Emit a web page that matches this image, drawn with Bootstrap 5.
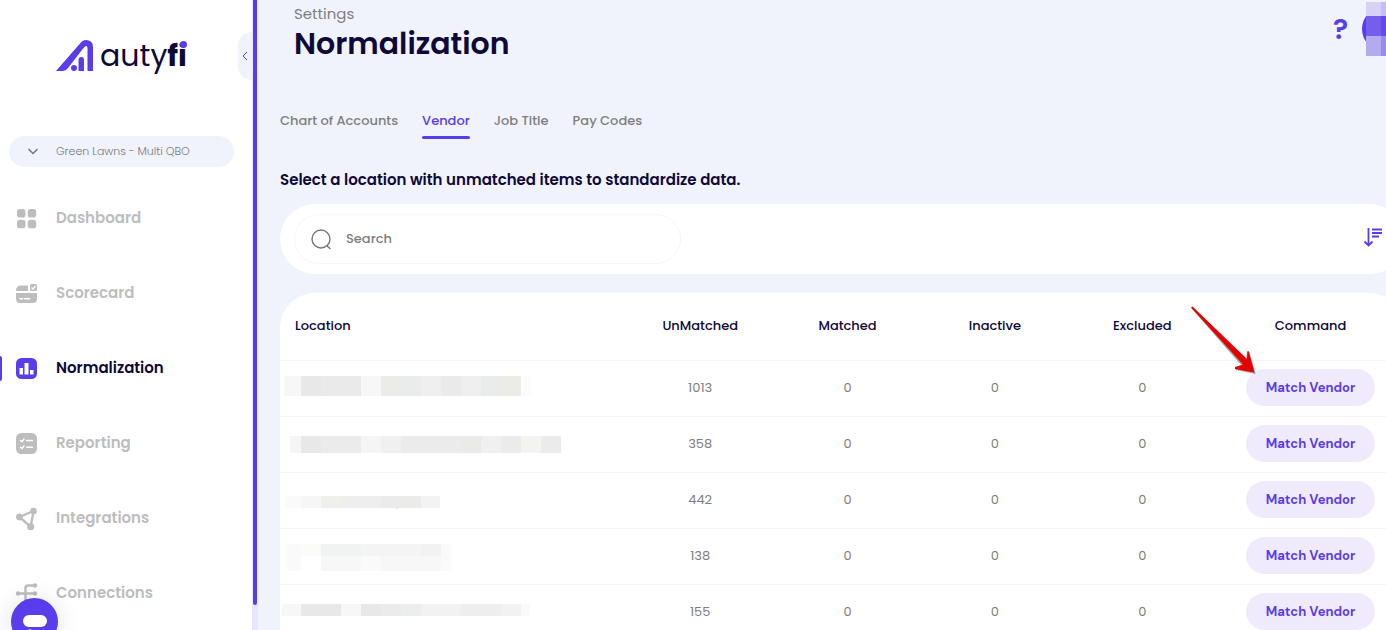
<!DOCTYPE html>
<html lang="en">
<head>
<meta charset="utf-8">
<meta name="viewport" content="width=device-width, initial-scale=1">
<title>Normalization - Autyfi</title>
<link href="https://cdn.jsdelivr.net/npm/bootstrap@5.3.0/dist/css/bootstrap.min.css" rel="stylesheet">
<style>
:root { --brand: #5a3dea; --ink: #0f0838; --page: #f0f3fb; --soft: #efebfd; --muted: #7e7e80; --idle: #bdbdbd; }
body { font-family: Poppins, Inter, sans-serif; background: var(--page); color: var(--ink); }
.shell { height: 100vh; overflow: hidden; }

/* sidebar */
.side { width: 252px; flex: none; background: #fff; }
.track { width: 6px; flex: none; background: #e9e6fc; padding: 0 1px; }
.thumb { height: 96%; background: var(--brand); border-radius: 0 0 3px 3px; }
.logo { padding: 36px 0 0 56px; height: 136px; text-decoration: none; color: var(--ink); }
.logo-text { font-size: 30px; line-height: 40px; font-weight: 400; }
.logo-text b { font-weight: 700; }
.logo-dot { right: 0; top: 5px; width: 7px; height: 7px; border-radius: 50%; background: var(--brand); }
.collapse-tab { right: 0; top: 32px; width: 14px; height: 48px; border: 0; padding: 0; background: var(--page); border-radius: 14px 0 0 14px; display: grid; place-items: center; }
.company { margin: 0 18px 14px 9px; }
.company select { appearance: none; width: 100%; height: 31px; border: 0; border-radius: 16px; background: var(--page); padding: 0 12px 0 47px; font-size: 11px; font-weight: 300; color: #77777a; }
.company svg { left: 19px; top: 12px; pointer-events: none; }
.side-link { height: 75px; padding-left: 15px; gap: 17px; color: var(--idle); font-size: 15px; font-weight: 600; text-decoration: none; }
.side-link svg { width: 24px; height: 24px; flex: none; }
.side-link.active { color: var(--ink); }
.side-link.active::before { content: ""; position: absolute; left: 0; top: 25px; width: 2px; height: 25px; background: var(--brand); border-radius: 0 2px 2px 0; }
.chat { left: 11px; bottom: -15px; width: 47px; height: 47px; border: 0; border-radius: 50%; background: var(--brand); padding: 0; box-shadow: 0 2px 24px #0002; }

/* main column; the panels run past the right edge of the window */
.main-col { min-width: 0; padding-left: 22px; overflow: hidden; }
.wide { margin-right: -19px; }
.topbar { height: 106px; padding-left: 14px; }
.crumb { font-size: 15px; line-height: 22px; padding-top: 3px; color: var(--muted); }
.topbar h1 { font-size: 30px; line-height: 38px; font-weight: 600; margin: 0; }
.help { font-family: "DM Sans", Poppins, sans-serif; font-size: 28px; line-height: 32px; font-weight: 800; color: var(--brand); border: 0; background: none; padding: 0; margin: 14px 14px 0 0; }
.tabs { gap: 24px; height: 34px; }
.tabs a { font-size: 13px; line-height: 30px; font-weight: 500; color: var(--muted); text-decoration: none; }
.tabs a::after { content: ""; display: block; height: 3px; border-radius: 2px; }
.tabs a.active { color: var(--brand); }
.tabs a.active::after { background: var(--brand); }
.hint { font-size: 15px; line-height: 24px; font-weight: 600; margin: 28px 0 12px; }
.panel { background: #fff; border-radius: 35px; }
.search-bar { height: 70px; padding: 0 22px 0 14px; margin-bottom: 19px; }
.search-box { width: 387px; height: 50px; border: 1px solid #f5f5fa; border-radius: 25px; padding: 0 16px; gap: 12px; }
.search-box input { border: 0; outline: 0; min-width: 0; font-size: 13px; font-weight: 500; color: var(--muted); background: none; }
.search-box input::placeholder { color: var(--muted); opacity: 1; }

.grid-table { table-layout: fixed; width: 100%; text-align: center; }
.grid-table th { height: 67px; padding: 0 0 1px; font-size: 13px; font-weight: 500; border-bottom: 1px solid #f5f5fb; }
.grid-table td { height: 56px; padding: 0 0 1px; font-size: 13px; color: var(--muted); border-bottom: 1px solid #f2f3f9; }
.grid-table th:first-child { text-align: left; padding-left: 15px; width: 30.8%; }
.grid-table th:last-child { width: 16.8%; }
.grid-table td svg.name { display: block; height: 54px; }
.match { width: 129px; height: 37px; border: 0; border-radius: 19px; background: var(--soft); color: var(--brand); font-family: "DM Sans", Poppins, sans-serif; font-size: 13px; font-weight: 700; }
.pointer { left: -56px; top: -63px; pointer-events: none; }
</style>
</head>
<body>
<div class="shell d-flex">
  <aside class="side position-relative">
    <a href="#" class="logo d-flex" aria-label="autyfi">
      <svg width="40" height="38" viewBox="0 0 40 38" fill="none">
        <path d="M0 35L24 7.500C26 5 27.500 4 30.500 4Q37 4.500 37 11V35H31.500V12Q31 8 27.500 12L12 32Q10 35 6 35Z" fill="#5a3dea"/>
        <circle cx="18" cy="32" r="3" fill="#5a3dea"/>
        <path d="M22.500 35V24Q22.500 21 25.500 21Q28 21 28 24V35Z" fill="#5a3dea"/>
      </svg>
      <span class="logo-text position-relative ms-1">auty<b>fi</b><i class="logo-dot position-absolute"></i></span>
    </a>
    <button class="collapse-tab position-absolute" aria-label="Collapse menu">
      <svg width="6" height="10" viewBox="0 0 6 10" fill="none" stroke="#5a3dea"><path d="M5 1L1 5L5 9"/></svg>
    </button>
    <div class="company position-relative">
      <select aria-label="Company"><option>Green Lawns - Multi QBO</option></select>
      <svg class="position-absolute" width="10" height="7" viewBox="0 0 10 7" fill="none" stroke="#77777a" stroke-width="1.500"><path d="M.5 1L5 5.500L9.500 1"/></svg>
    </div>
    <nav>
      <a href="#" class="side-link d-flex align-items-center position-relative">
        <svg viewBox="0 0 24 24" fill="currentColor"><rect x="2" y="2" width="8.500" height="8.500" rx="2.800"/><rect x="12.700" y="2" width="8.500" height="8.500" rx="2.800"/><rect x="2" y="12.700" width="8.500" height="8.500" rx="2.800"/><rect x="12.700" y="12.700" width="8.500" height="8.500" rx="2.800"/></svg>
        Dashboard</a>
      <a href="#" class="side-link d-flex align-items-center position-relative">
        <svg viewBox="0 0 24 24" fill="currentColor"><path d="M1 9Q1 3.500 6 3.500H13V9Z"/><rect x="15" y="2" width="7" height="7" rx="1.500"/><path d="M16.500 5.500L18 7L20.500 4" fill="none" stroke="#fff" stroke-width="1.200"/><path d="M1 11H22V16.500Q22 21 18 21H5Q1 21 1 16.500Z"/><path d="M5 16.800H7.500M9.500 16.800H14.500" stroke="#fff" stroke-width="1.600" stroke-linecap="round"/></svg>
        Scorecard</a>
      <a href="#" class="side-link active d-flex align-items-center position-relative" aria-current="page">
        <svg viewBox="0 0 24 24"><rect x="1" y="1" width="21" height="21" rx="5.500" fill="#5a3dea"/><path d="M4.500 11h3.500v6.500h-3.500zM9.500 6h4v11.500h-4zM15 13h3.500v4.500h-3.500z" fill="#fff"/></svg>
        Normalization</a>
      <a href="#" class="side-link d-flex align-items-center position-relative">
        <svg viewBox="0 0 24 24"><rect x="1" y="1" width="21" height="21" rx="5.500" fill="currentColor"/><path d="M5.500 8.500L7 9.700L9 7M11.500 8.500H17.500M5.500 15.300L7 16.500L9 13.800M11.500 15.300H17.500" fill="none" stroke="#fff" stroke-width="1.400" stroke-linecap="round"/></svg>
        Reporting</a>
      <a href="#" class="side-link d-flex align-items-center position-relative">
        <svg viewBox="0 0 24 24"><path d="M4.500 10L18.500 4L15.700 20Z" fill="none" stroke="currentColor" stroke-width="2.400"/><g fill="currentColor"><circle cx="4.500" cy="10" r="3.500"/><circle cx="18.500" cy="4" r="3.300"/><circle cx="15.700" cy="19.800" r="3.500"/></g></svg>
        Integrations</a>
      <a href="#" class="side-link d-flex align-items-center position-relative">
        <svg viewBox="0 0 24 24"><path d="M3 11.500H20M20 3.500H13Q10.500 3.500 10.500 6V17Q10.500 19.500 13 19.500H20" fill="none" stroke="currentColor" stroke-width="2.400"/><g fill="currentColor"><circle cx="3" cy="11.500" r="2.200"/><circle cx="20" cy="11.500" r="2.200"/><circle cx="20" cy="3.500" r="2.200"/><circle cx="20" cy="19.500" r="2.200"/></g></svg>
        Connections</a>
    </nav>
    <button class="chat position-absolute" aria-label="Open chat">
      <svg width="47" height="47" viewBox="0 0 47 47" class="d-block"><rect x="12" y="17" width="24" height="12" rx="6" fill="#fff"/><path d="M16 33Q19 29.500 22 33Z" fill="#fff"/></svg>
    </button>
  </aside>
  <div class="track"><div class="thumb"></div></div>

  <main class="main-col flex-grow-1">
    <header class="topbar d-flex">
      <div class="flex-grow-1">
        <div class="crumb">Settings</div>
        <h1>Normalization</h1>
      </div>
      <div class="d-flex align-items-start">
        <button class="help" aria-label="Help">?</button>
        <svg width="24" height="58" viewBox="0 0 24 58" role="img" aria-label="Account">
          <circle cx="22" cy="29" r="22" fill="#5a3dea"/>
          <path d="M4 0H24V58H4Z" fill="#f0f3fb"/>
          <path d="M4 2H19V16H4Z" fill="#d7d2f4"/><path d="M19 2H24V16H19Z" fill="#c5bdf3"/>
          <path d="M4 16H19V36H4Z" fill="#755eee"/><path d="M19 16H24V36H19Z" fill="#6549e9"/>
          <path d="M4 36H19V56H4Z" fill="#b4aaf0"/><path d="M19 36H24V56H19Z" fill="#9b89ed"/>
        </svg>
      </div>
    </header>
    <nav class="tabs d-flex align-items-start">
      <a href="#">Chart of Accounts</a>
      <a href="#" class="active" aria-current="page">Vendor</a>
      <a href="#">Job Title</a>
      <a href="#">Pay Codes</a>
    </nav>
    <h2 class="hint">Select a location with unmatched items to standardize data.</h2>

    <div class="wide">
      <div class="panel search-bar d-flex align-items-center justify-content-between">
        <label class="search-box d-flex align-items-center">
          <svg width="21" height="22" viewBox="0 0 21 22" fill="none" stroke="#77777a" stroke-width="1.400" class="flex-shrink-0"><circle cx="10" cy="11" r="9"/><path d="M15.500 17.500L19.500 21"/></svg>
          <input class="flex-grow-1" type="text" placeholder="Search" aria-label="Search">
        </label>
        <button class="btn border-0 p-0" aria-label="Sort">
          <svg width="20" height="24" viewBox="0 0 20 24" fill="none" stroke="#5a3dea" stroke-width="1.800" class="d-block"><path d="M5.500 1V18M1.500 14.500L5.500 18.500L9.500 14.500M9 2.500H19M9 6H19M9 9.500H16"/></svg>
        </button>
      </div>

      <div class="panel pb-5">
        <table class="grid-table">
          <thead>
            <tr><th scope="col">Location</th><th scope="col">UnMatched</th><th scope="col">Matched</th><th scope="col">Inactive</th><th scope="col">Excluded</th><th scope="col">Command</th></tr>
          </thead>
          <tbody>
            <tr>
              <td><svg class="name" width="290"><path d="M4 15h17v20h-17zM81 15h20v20h-20z" fill="#f7f7f7"/><path d="M21 15h20v20h-20z" fill="#e8e8e8"/><path d="M41 15h40v20h-40zM161 15h20v20h-20z" fill="#eaeaea"/><path d="M101 15h20v20h-20zM221 15h20v20h-20z" fill="#ebebe8"/><path d="M121 15h20v20h-20zM201 15h20v20h-20z" fill="#eaeceb"/><path d="M141 15h20v20h-20zM181 15h20v20h-20z" fill="#efefef"/><path d="M241 15h10v20h-10z" fill="#fafdfc"/></svg></td>
              <td>1013</td><td>0</td><td>0</td><td>0</td>
              <td><div class="position-relative d-inline-block"><button class="match">Match Vendor</button>
                <svg class="pointer position-absolute" width="68" height="70" viewBox="0 0 68 70"><path d="M1.500 2.500L3 1.500L56 54L57 46L59.500 46L65.500 68L46 64L46 62L52 60Z" fill="#444" opacity=".5"/><path d="M1 1.500L2.500 .5L57 53L57.500 45L58.500 45L64.500 66.500L45 63L45 61L53 58.500Z" fill="#e60000"/></svg></div></td>
            </tr>
            <tr>
              <td><svg class="name" width="290"><path d="M10 19h11v17h-11zM81 19h20v17h-20z" fill="#f5f5f5"/><path d="M21 19h20v17h-20z" fill="#e8e8e8"/><path d="M41 19h40v17h-40zM121 19h60v17h-60zM221 19h20v17h-20zM261 19h20v17h-20z" fill="#ebebeb"/><path d="M101 19h20v17h-20zM201 19h20v17h-20z" fill="#f0f0f0"/><path d="M181 19h20v17h-20z" fill="#eaeae7"/><path d="M241 19h20v17h-20z" fill="#f3f3f0"/></svg></td>
              <td>358</td><td>0</td><td>0</td><td>0</td>
              <td><button class="match">Match Vendor</button></td>
            </tr>
            <tr>
              <td><svg class="name" width="290"><path d="M5 23h16v12h-16z" fill="#fafafa"/><path d="M21 23h20v12h-20z" fill="#f6f6f6"/><path d="M41 23h20v12h-20z" fill="#efefec"/><path d="M61 23h40v12h-40z" fill="#eeeeee"/><path d="M101 23h20v12h-20z" fill="#ebebeb"/><path d="M121 23h20v12h-20z" fill="#ebebe9"/><path d="M141 23h19v12h-19z" fill="#f3f3f3"/><path d="M116 35h2v1h-2z" fill="#ddd"/></svg></td>
              <td>442</td><td>0</td><td>0</td><td>0</td>
              <td><button class="match">Match Vendor</button></td>
            </tr>
            <tr>
              <td><svg class="name" width="290"><path d="M7 15h14v27h-14zM161 15h10v27h-10zM81 27h20v15h-20z" fill="#fafafa"/><path d="M21 15h20v12h-20z" fill="#fbfbf8"/><path d="M21 27h20v15h-20z" fill="#fff"/><path d="M41 15h40v12h-40z" fill="#f1f3f2"/><path d="M81 15h60v12h-60z" fill="#f4f4f4"/><path d="M141 15h20v12h-20z" fill="#f2f2f2"/><path d="M41 27h40v15h-40zM101 27h60v15h-60z" fill="#f7f7f7"/></svg></td>
              <td>138</td><td>0</td><td>0</td><td>0</td>
              <td><button class="match">Match Vendor</button></td>
            </tr>
            <tr>
              <td><svg class="name" width="290"><path d="M2 19h19v12h-19zM61 19h20v12h-20z" fill="#f7f7f7"/><path d="M21 19h40v12h-40zM81 19h20v12h-20z" fill="#e8e8e8"/><path d="M101 19h20v12h-20z" fill="#ebebeb"/><path d="M121 19h20v12h-20z" fill="#ebeeed"/><path d="M141 19h40v12h-40zM221 19h20v12h-20z" fill="#f2f2f2"/><path d="M181 19h40v12h-40z" fill="#eeeeee"/><path d="M241 19h9v12h-9z" fill="#fafafa"/></svg></td>
              <td>155</td><td>0</td><td>0</td><td>0</td>
              <td><button class="match">Match Vendor</button></td>
            </tr>
          </tbody>
        </table>
      </div>
    </div>
  </main>
</div>
<script src="https://cdn.jsdelivr.net/npm/bootstrap@5.3.0/dist/js/bootstrap.bundle.min.js"></script>
</body>
</html>
